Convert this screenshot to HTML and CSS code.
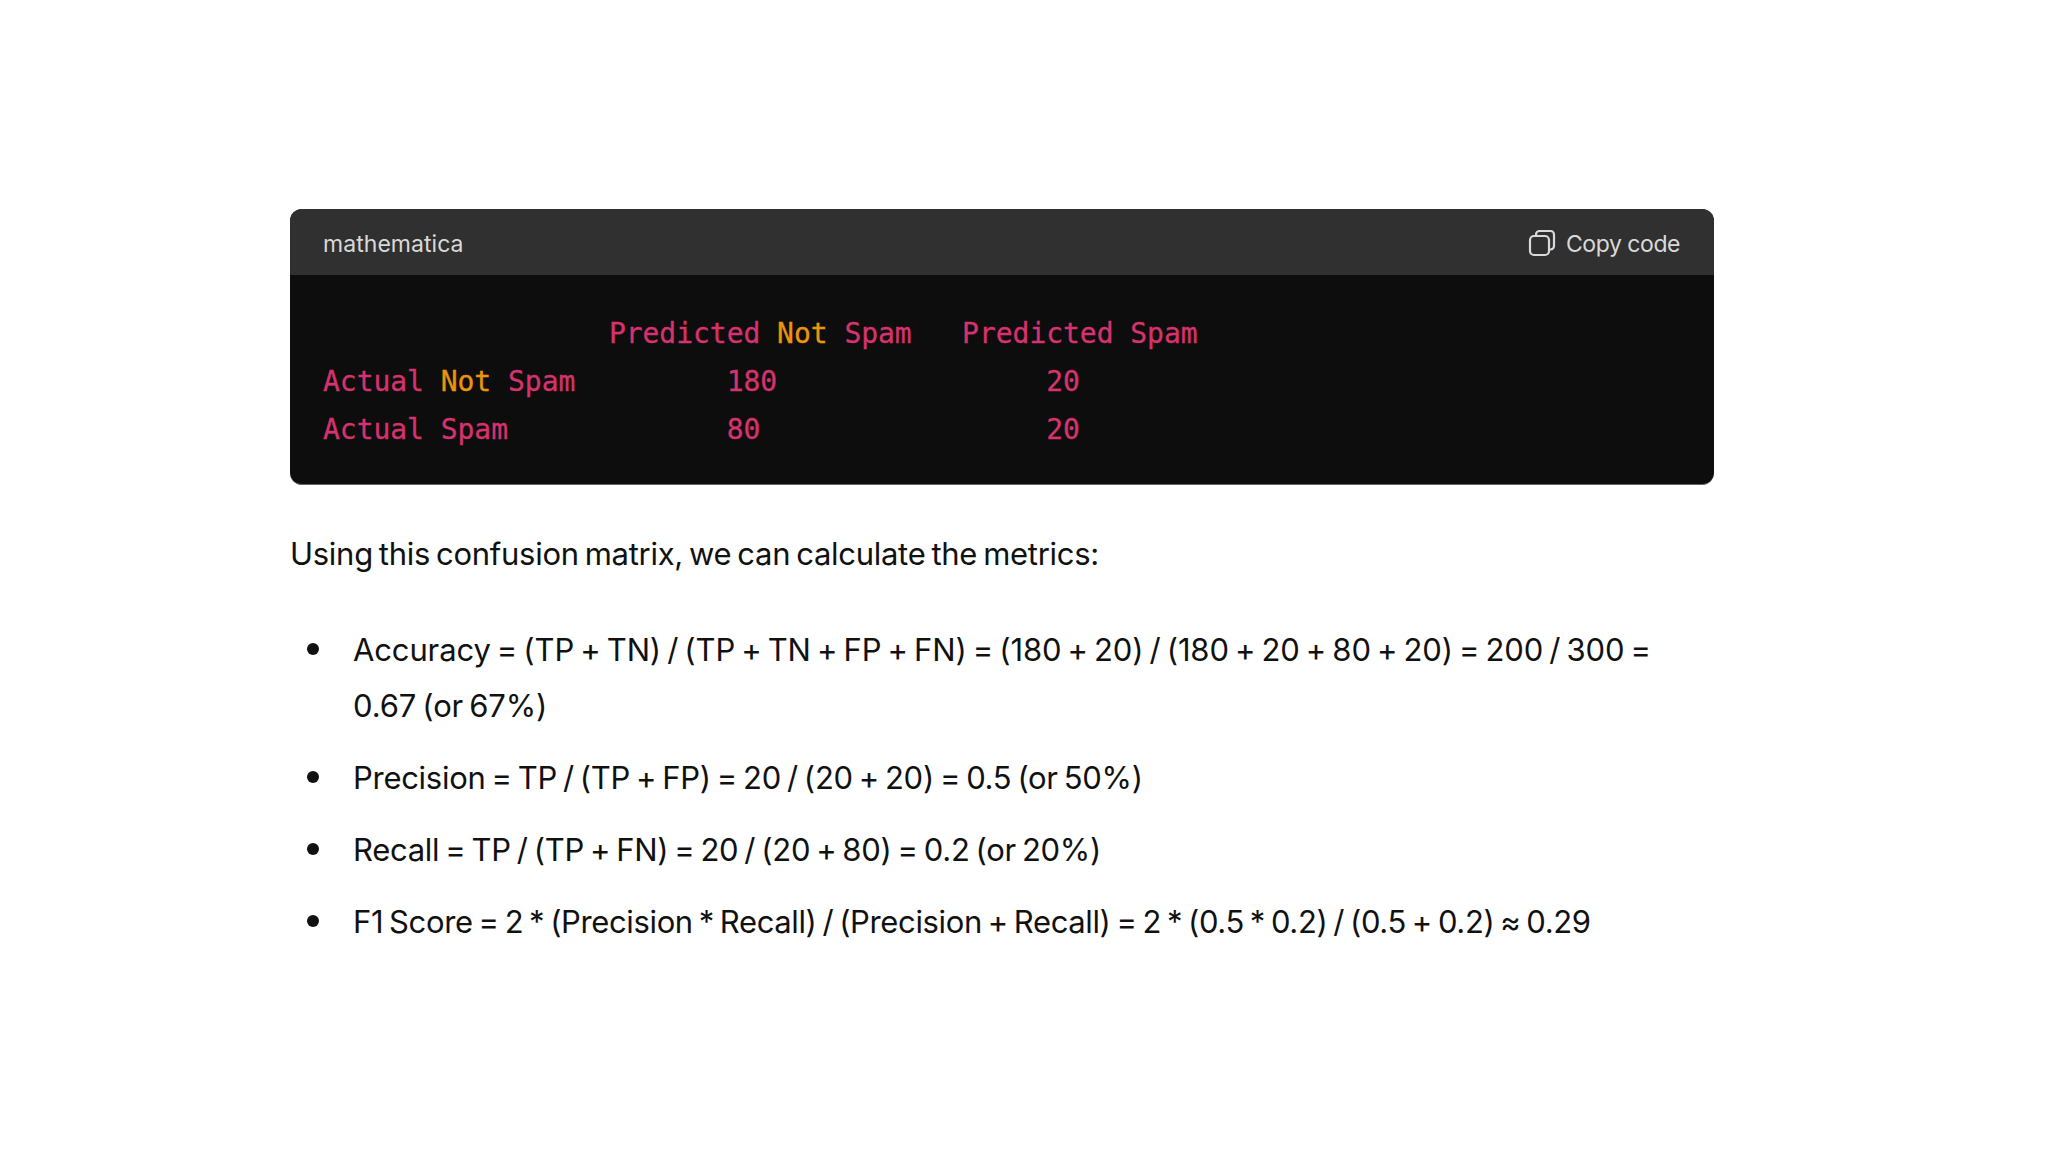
FILE: index.html
```html
<!DOCTYPE html>
<html lang="en">
<head>
<meta charset="utf-8">
<title>Confusion matrix</title>
<link rel="stylesheet" href="styles.css">
</head>
<body>
<main class="message">
  <section class="code-card">
    <header class="code-head">
      <span class="lang">mathematica</span>
      <button class="copy" type="button">
        <svg class="copy-icon" viewBox="0 0 28 28" fill="none" stroke="currentColor" stroke-width="2.2" stroke-linejoin="round"><rect x="2" y="7" width="19" height="19" rx="4"/><path d="M8 7V5.500A3.500 3.500 0 0 1 11.500 2H22.500A3.500 3.500 0 0 1 26 5.500V17A3.500 3.500 0 0 1 22.500 20.500H21"/></svg>
        <span>Copy code</span>
      </button>
    </header>
    <pre class="code-body"><code class="code-text">                 <span class="pk">Predicted</span> <span class="or">Not</span> <span class="pk">Spam</span>   <span class="pk">Predicted Spam</span>
<span class="pk">Actual</span> <span class="or">Not</span> <span class="pk">Spam</span>         <span class="pk">180</span>                <span class="pk">20</span>
<span class="pk">Actual Spam</span>             <span class="pk">80</span>                 <span class="pk">20</span></code></pre>
  </section>
  <p class="intro">Using this confusion matrix, we can calculate the metrics:</p>
  <ul class="metrics">
    <li class="wide">Accuracy = (TP + TN) / (TP + TN + FP + FN) = (180 + 20) / (180 + 20 + 80 + 20) = 200 / 300 = 0.67 (or 67%)</li>
    <li>Precision = TP / (TP + FP) = 20 / (20 + 20) = 0.5 (or 50%)</li>
    <li>Recall = TP / (TP + FN) = 20 / (20 + 80) = 0.2 (or 20%)</li>
    <li class="tight">F1 Score = 2 * (Precision * Recall) / (Precision + Recall) = 2 * (0.5 * 0.2) / (0.5 + 0.2) ≈ 0.29</li>
  </ul>
</main>
</body>
</html>
```
FILE: styles.css
```css
html, body { margin: 0; background: #fff; }
body { height: 1152px; overflow: hidden; }
.message {
  width: 1424px;
  margin-left: 290px;
  padding-top: 209px;
  font-family: "Inter", "Liberation Sans", sans-serif;
  color: #111;
}
.code-card {
  background: #0d0d0d;
  border-radius: 12px;
  overflow: hidden;
  border-bottom: 1px solid #666;
  box-sizing: border-box;
  height: 276px;
}
.code-head {
  height: 66px;
  box-sizing: border-box;
  padding: 4px 34px 0 33px;
  background: #303030;
  display: flex;
  align-items: center;
  justify-content: space-between;
  color: #d9d9d9;
  font-size: 23px;
  letter-spacing: -0.45px;
}
.lang { letter-spacing: 0.05px; }
.copy {
  display: flex;
  align-items: center;
  gap: 10px;
  background: none;
  border: 0;
  padding: 0;
  font: inherit;
  letter-spacing: inherit;
  color: inherit;
}
.copy-icon { width: 28px; height: 28px; margin-bottom: 3px; }
.code-body {
  margin: 0;
  padding: 35px 33px 0;
}
.code-text {
  font-family: "DejaVu Sans Mono", monospace;
  font-size: 28px;
  line-height: 48px;
  letter-spacing: -0.04px;
  -webkit-text-stroke: 0.3px currentColor;
}
.pk { color: #d6326e; }
.or { color: #e9950c; }
.intro {
  margin: 41px 0 0;
  font-size: 31px;
  line-height: 56px;
  letter-spacing: -0.28px;
  word-spacing: -2.45px;
}
.metrics {
  list-style: none;
  margin: 40px 0 0;
  padding: 0 0 0 63px;
  font-size: 31px;
  line-height: 56px;
  letter-spacing: -0.28px;
  word-spacing: -2.45px;
}
.metrics li { position: relative; margin-bottom: 16px; }
.metrics .wide { letter-spacing: -0.13px; }
.metrics .tight { letter-spacing: -0.365px; }
.metrics li::before {
  content: "";
  position: absolute;
  left: -46px;
  top: 21px;
  width: 12px;
  height: 12px;
  border-radius: 50%;
  background: #111;
}
```
